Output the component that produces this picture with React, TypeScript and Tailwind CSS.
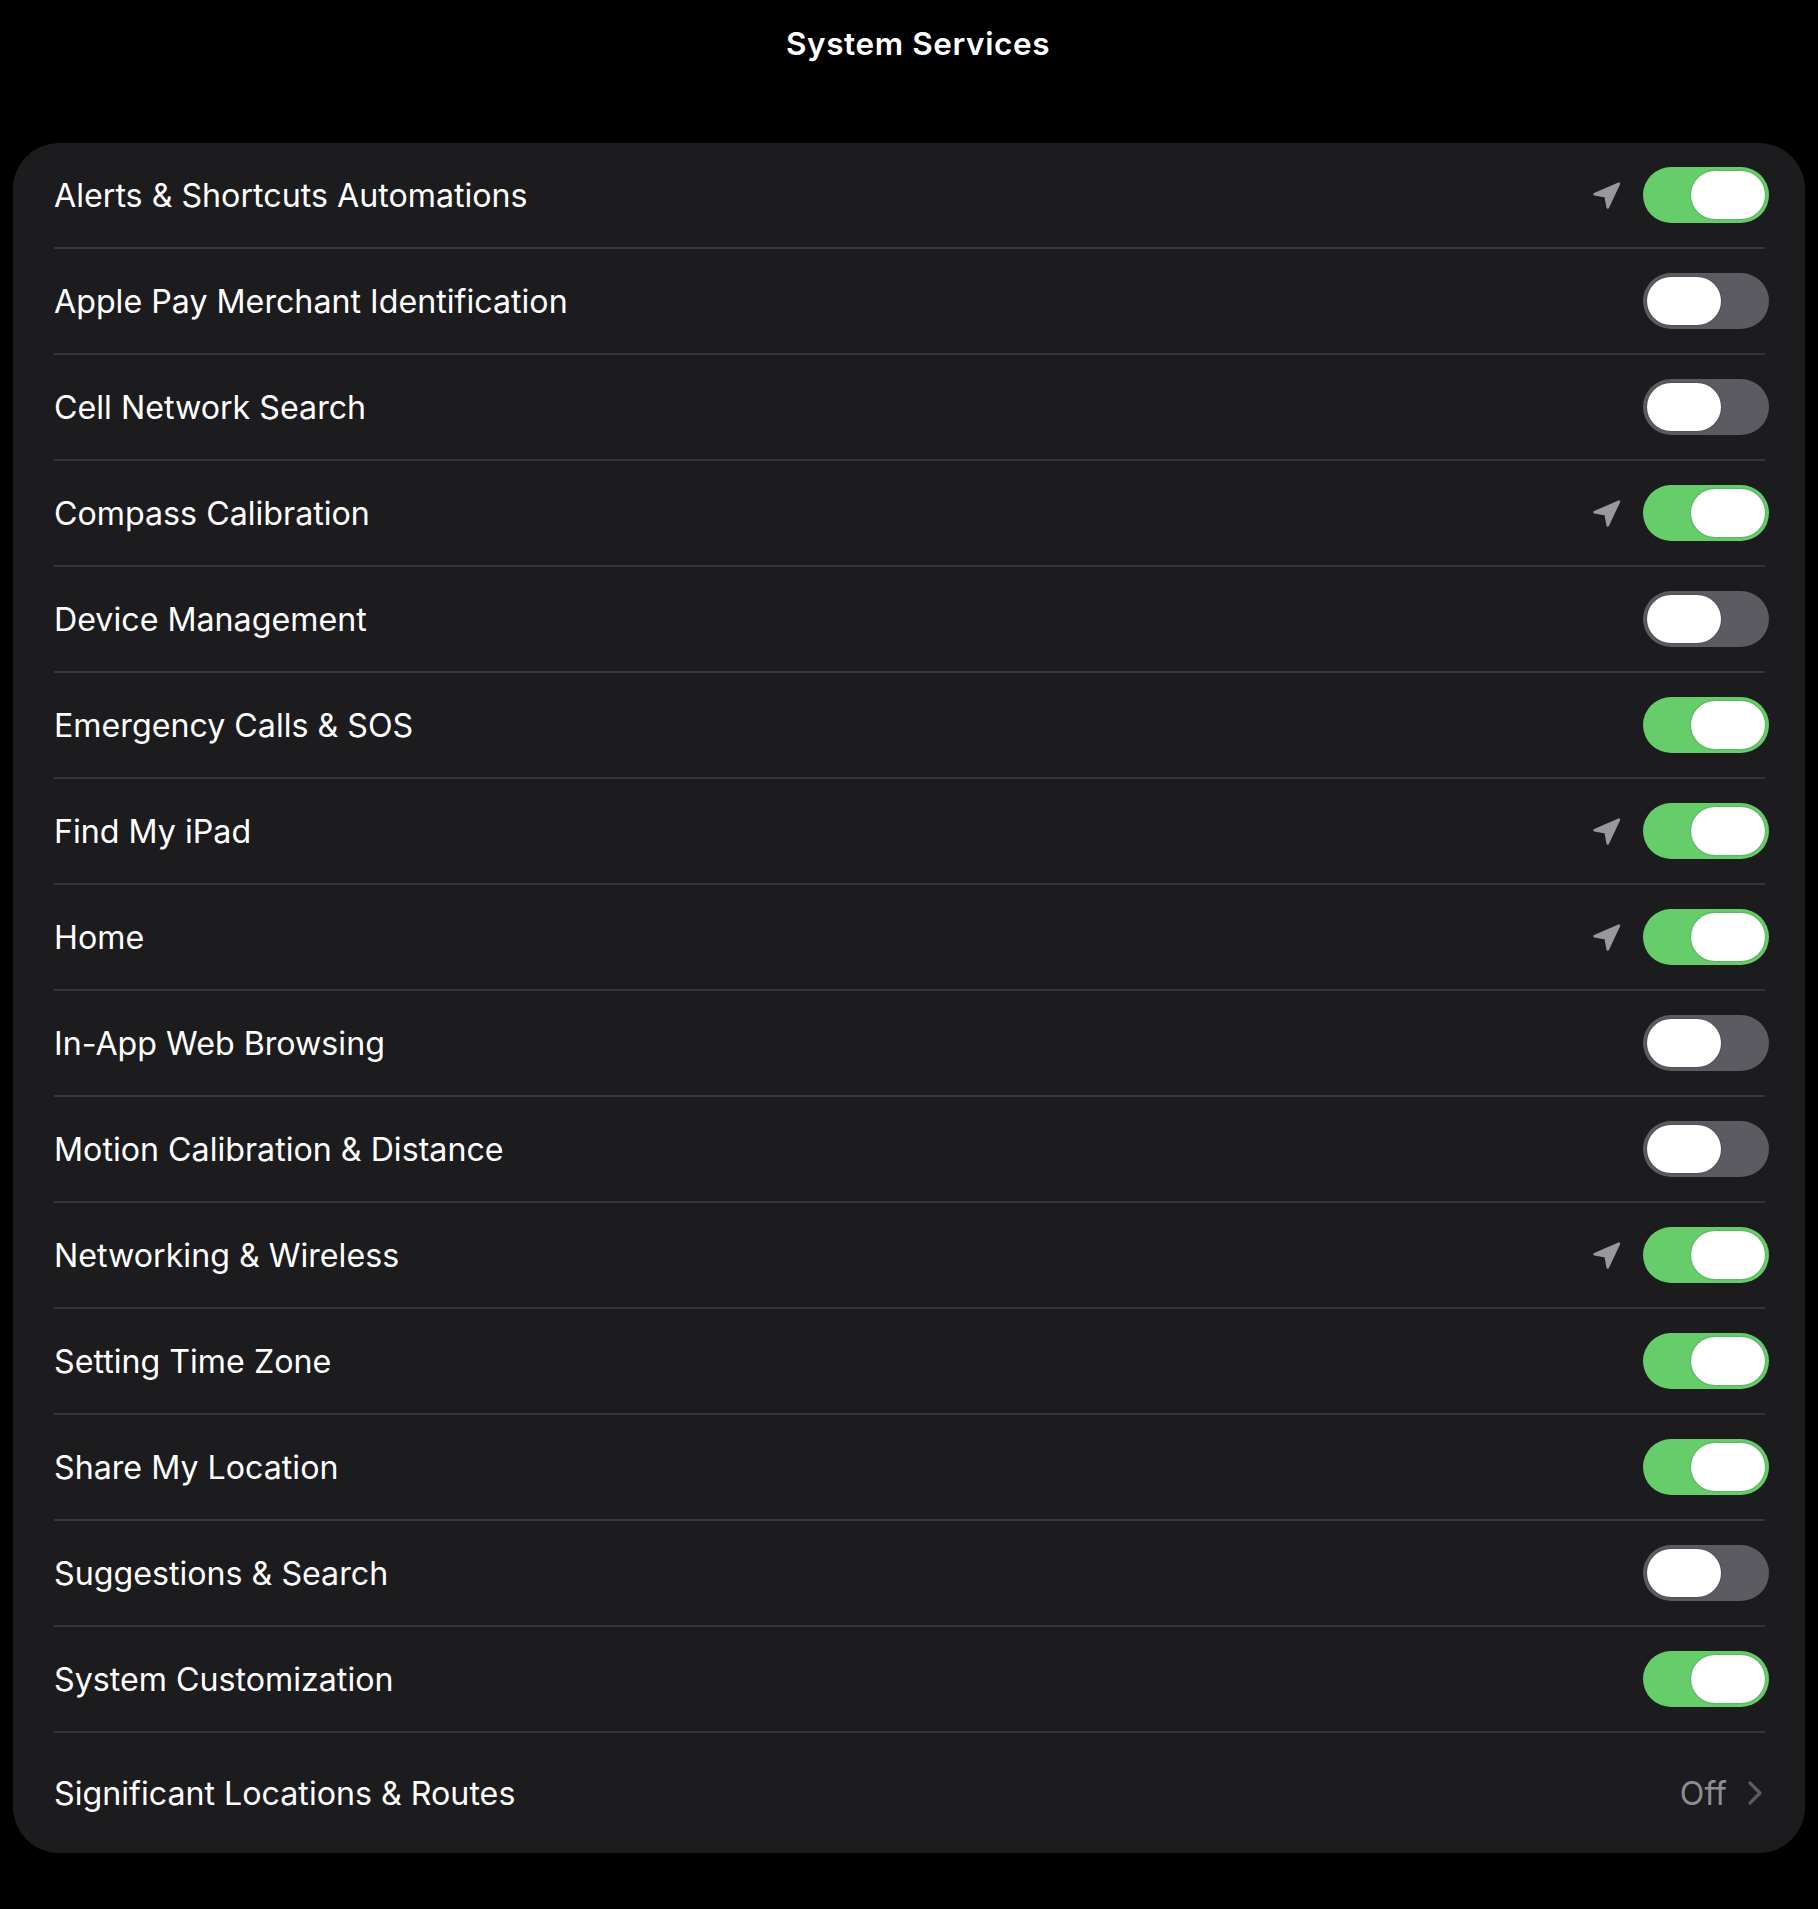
const rows: { label: string; on: boolean; loc?: boolean }[] = [
  { label: "Alerts & Shortcuts Automations", on: true, loc: true },
  { label: "Apple Pay Merchant Identification", on: false },
  { label: "Cell Network Search", on: false },
  { label: "Compass Calibration", on: true, loc: true },
  { label: "Device Management", on: false },
  { label: "Emergency Calls & SOS", on: true },
  { label: "Find My iPad", on: true, loc: true },
  { label: "Home", on: true, loc: true },
  { label: "In-App Web Browsing", on: false },
  { label: "Motion Calibration & Distance", on: false },
  { label: "Networking & Wireless", on: true, loc: true },
  { label: "Setting Time Zone", on: true },
  { label: "Share My Location", on: true },
  { label: "Suggestions & Search", on: false },
  { label: "System Customization", on: true },
]

function LocationArrow() {
  return (
    <svg width="29" height="29" viewBox="0 0 28 28" className="shrink-0">
      <path
        d="M26 2.5 L2.5 12.8 L13.2 14.8 L15.2 25.5 Z"
        fill="#98989e"
        stroke="#98989e"
        strokeWidth="2.5"
        strokeLinejoin="round"
      />
    </svg>
  )
}

function Toggle({ on }: { on: boolean }) {
  return (
    <div
      className={
        "relative h-[56px] w-[126px] shrink-0 rounded-full -mr-[4px] " +
        (on ? "bg-[#65cd6a]" : "bg-[#5c5b61]")
      }
    >
      <div
        className={
          "absolute top-[4px] h-[48px] w-[74px] rounded-full bg-white shadow-[0_0_2px_rgba(0,0,0,0.35)] " +
          (on ? "right-[4px]" : "left-[4px]")
        }
      />
    </div>
  )
}

export default function App() {
  return (
    <div
      className="min-h-[1909px] w-full bg-black text-white"
      style={{ fontFamily: "Inter, 'Noto Sans', sans-serif" }}
    >
      <div className="h-[143px] pt-[26px] pl-[18px] text-center">
        <h1 className="text-[31.5px] leading-[36px] font-semibold tracking-[0.6px]">System Services</h1>
      </div>

      <div className="mx-[13px] rounded-[46px] bg-[#1c1c1e]">
        {rows.map((r) => (
          <div
            key={r.label}
            className="ml-[41px] mr-[40px] flex h-[106px] items-center border-b-2 border-[#363638]"
          >
            <span className="flex-1 pt-[3px] text-[32.2px] leading-none">{r.label}</span>
            {r.loc && (
              <div className="mr-[22px] flex items-center">
                <LocationArrow />
              </div>
            )}
            <Toggle on={r.on} />
          </div>
        ))}
        <div className="ml-[41px] mr-[40px] flex h-[120px] items-center">
          <span className="flex-1 pt-[3px] text-[32.2px] leading-none">
            Significant Locations &amp; Routes
          </span>
          <span className="pt-[3px] text-[32.2px] leading-none text-[#8d8d93]">Off</span>
          <svg width="16" height="26" viewBox="0 0 16 26" className="ml-[20px] mr-[2px]">
            <path
              d="M3 3 L13 13 L3 23"
              fill="none"
              stroke="#5b5b60"
              strokeWidth="3.2"
              strokeLinecap="round"
              strokeLinejoin="round"
            />
          </svg>
        </div>
      </div>
    </div>
  )
}
